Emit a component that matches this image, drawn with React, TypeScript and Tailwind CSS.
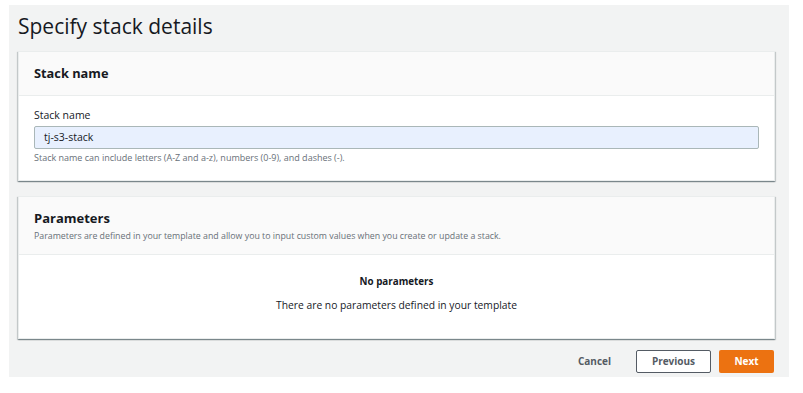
import React from 'react';

const font = { fontFamily: '"Open Sans", "Noto Sans", Arial, sans-serif' };

function Card({ children }: { children: React.ReactNode }) {
  return (
    <div className="bg-white border border-[#eaeded] shadow-[0_1px_1px_0_rgba(0,28,36,0.3),1px_1px_1px_0_rgba(0,28,36,0.15),-1px_1px_1px_0_rgba(0,28,36,0.15)]">
      {children}
    </div>
  );
}

export default function App() {
  return (
    <div className="w-[803px] h-[393px] bg-white pt-[5px] pl-[9px]" style={font}>
      <div className="w-[780px] h-[372px] bg-[#f2f3f3] pl-[9px] pr-[14px] flex flex-col">
        <h1 className="text-[21px] leading-[40px] text-[#16191f] mt-[1px] h-[45px]">
          Specify stack details
        </h1>

        <Card>
          <div className="h-[44px] bg-[#fafafa] border-b border-[#eaeded] px-[15px] flex items-center">
            <span className="text-[12.8px] font-bold text-[#16191f]">Stack name</span>
          </div>
          <div className="pl-[15px] pr-[15px] pt-[10px] pb-[14px]">
            <div className="text-[10.5px] text-[#16191f] leading-[18px]">Stack name</div>
            <div className="mt-[2px] h-[23px] bg-[#e8f0fe] border border-[#aab7b8] rounded-[2px] flex items-center px-[9px]">
              <span className="text-[10.5px] text-[#16191f]">tj-s3-stack</span>
            </div>
            <div className="text-[9px] text-[#687078] leading-[16px] mt-[1px]">
              Stack name can include letters (A-Z and a-z), numbers (0-9), and dashes (-).
            </div>
          </div>
        </Card>

        <div className="h-[15px]" />

        <Card>
          <div className="h-[58px] bg-[#fafafa] border-b border-[#eaeded] px-[15px] pt-[11px]">
            <div className="text-[13px] font-bold text-[#16191f] leading-[20px]">Parameters</div>
            <div className="text-[8.8px] text-[#687078] leading-[16px]">
              Parameters are defined in your template and allow you to input custom values when you create or update a stack.
            </div>
          </div>
          <div className="h-[83px] flex flex-col items-center pt-[18px]">
            <div className="text-[9.8px] font-bold text-[#16191f] leading-[18px]">No parameters</div>
            <div className="text-[10.3px] text-[#16191f] leading-[18px] mt-[5px]">
              There are no parameters defined in your template
            </div>
          </div>
        </Card>

        <div className="flex items-center justify-end gap-[8px] mt-[11px] pr-[1px]">
          <button className="text-[10px] font-bold text-[#545b64] px-[17px] h-[23px]">Cancel</button>
          <button className="text-[10px] font-bold text-[#545b64] h-[23px] w-[75px] border border-[#545b64] rounded-[2px] bg-white">
            Previous
          </button>
          <button className="text-[10px] font-bold text-white h-[23px] w-[55px] bg-[#ec7211] rounded-[2px]">
            Next
          </button>
        </div>
      </div>
    </div>
  );
}
